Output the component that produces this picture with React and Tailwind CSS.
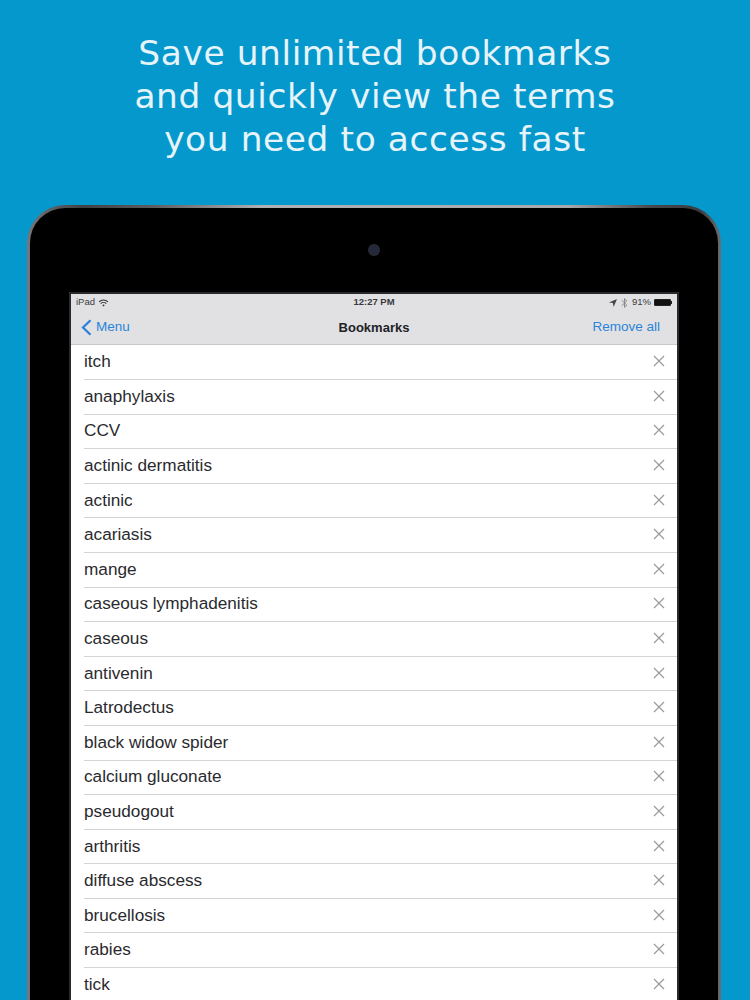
const terms = [
  "itch", "anaphylaxis", "CCV", "actinic dermatitis", "actinic", "acariasis", "mange",
  "caseous lymphadenitis", "caseous", "antivenin", "Latrodectus", "black widow spider",
  "calcium gluconate", "pseudogout", "arthritis", "diffuse abscess", "brucellosis", "rabies", "tick",
];

function Row({ term }) {
  return (
    <div className="ml-[13px] flex h-[34.6px] shrink-0 items-center justify-between border-b border-[#d4d4d6] pr-[12px] text-[17.2px] text-[#2a2a2e]">
      <span>{term}</span>
      <svg width="12" height="12" viewBox="0 0 12 12" className="mb-[2px] text-[#9a9a9e]">
        <path d="M1 1L11 11M11 1L1 11" stroke="currentColor" strokeWidth="1.2" fill="none" />
      </svg>
    </div>
  );
}

function StatusBar() {
  return (
    <div className="relative flex h-[17px] items-center justify-between px-[5px] text-[9.5px] text-[#3a3a3e]">
      <div className="flex items-center gap-[3px]">
        <span>iPad</span>
        <svg width="11" height="8" viewBox="0 0 10 8" fill="none" stroke="#333336" strokeWidth="1.1">
          <path d="M0.6 2.8a6.4 6.4 0 0 1 8.8 0" />
          <path d="M2.2 4.6a4 4 0 0 1 5.6 0" />
          <path d="M5 7.6L3.8 6.2a1.7 1.7 0 0 1 2.4 0z" fill="#333336" stroke="none" />
        </svg>
      </div>
      <span className="absolute left-0 right-0 text-center text-[9.5px] font-bold text-[#3a3a3e]">12:27 PM</span>
      <div className="flex items-center gap-[3px]">
        <svg width="8" height="8" viewBox="0 0 8 8" fill="#444448">
          <path d="M8 0L4.6 8L3.9 4.1L0 3.4z" />
        </svg>
        <svg width="7" height="12" viewBox="0 0 6 11" fill="none" stroke="#8a8a8e" strokeWidth="0.9" className="mx-[1px]">
          <path d="M0.5 3L5 7.3L3 9.6V1.4L5 3.7L0.5 8" />
        </svg>
        <span>91%</span>
        <div className="flex items-center">
          <div className="h-[7px] w-[17px] rounded-[1px] border border-[#222] bg-[#111]" />
          <div className="h-[3px] w-[1px] bg-[#222]" />
        </div>
      </div>
    </div>
  );
}

export default function App() {
  return (
    <div className="flex h-[1000px] w-[750px] flex-col items-center overflow-hidden bg-[#0598cc] font-['Liberation_Sans',sans-serif]">
      <h1 className="mt-[32px] h-[173px] w-full shrink-0 whitespace-pre-line text-center font-['DejaVu_Sans',sans-serif] text-[34.4px] font-normal leading-[43px] tracking-[0.6px] text-[#e6f4fa]">
        {"Save unlimited bookmarks\nand quickly view the terms\nyou need to access fast"}
      </h1>

      {/* iPad frame, the metal edge is a gradient behind the black face */}
      <div className="mr-[2px] h-[900px] w-[694px] shrink-0 rounded-t-[38px] bg-[linear-gradient(90deg,#75777b_0%,#3e4044_8%,#5a5c60_18%,#aeb0b2_34%,#a6a8aa_78%,#45474b_90%,#3a3c40_97%,#6a6c70_100%)] px-[3px] pt-[3px]">
        <div className="flex h-full flex-col items-center rounded-t-[35px] bg-black">
          <div className="mt-[37px] h-[10px] w-[10px] rounded-full bg-[#23283a] ring-1 ring-[#2c2e34]" />
          <div className="mt-[37px] flex h-[800px] w-[610px] flex-col border-x-[2px] border-t-[2px] border-[#2a2a2c] bg-white">
            <div className="h-[51.4px] shrink-0 border-b border-[#c8c8cb] bg-[#e1e1e4]">
              <StatusBar />
              <div className="relative flex h-[33px] items-center justify-between pl-[10px] pr-[17px] text-[13.5px] text-[#2a85d8]">
                <div className="flex items-center gap-[4px]">
                  <svg width="11" height="17" viewBox="0 0 11 17" fill="none" stroke="#2a7fdc" strokeWidth="2.2">
                    <path d="M9.5 1.2L2 8.5L9.5 15.8" />
                  </svg>
                  <span>Menu</span>
                </div>
                <span className="absolute left-0 right-0 text-center text-[13px] font-bold text-[#222226]">Bookmarks</span>
                <span>Remove all</span>
              </div>
            </div>
            {terms.map((t) => (
              <Row key={t} term={t} />
            ))}
          </div>
        </div>
      </div>
    </div>
  );
}
